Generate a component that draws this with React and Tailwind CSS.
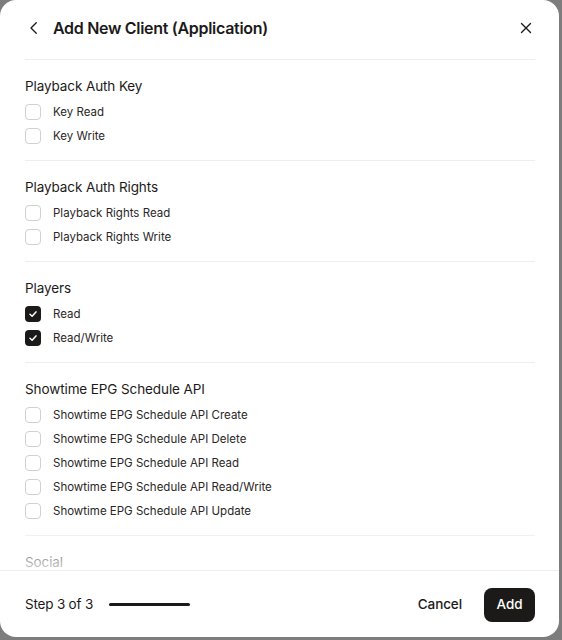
import React from "react";

const sections = [
  { title: "Playback Auth Key", items: [["Key Read", false], ["Key Write", false]] },
  { title: "Playback Auth Rights", items: [["Playback Rights Read", false], ["Playback Rights Write", false]] },
  { title: "Players", items: [["Read", true], ["Read/Write", true]] },
  {
    title: "Showtime EPG Schedule API",
    items: [
      ["Showtime EPG Schedule API Create", false],
      ["Showtime EPG Schedule API Delete", false],
      ["Showtime EPG Schedule API Read", false],
      ["Showtime EPG Schedule API Read/Write", false],
      ["Showtime EPG Schedule API Update", false],
    ],
  },
  { title: "Social", items: [] },
];

function Box({ checked }) {
  return checked ? (
    <span className="flex h-4 w-4 items-center justify-center rounded-[4px] bg-[#1c1a19]">
      <svg width="10" height="10" viewBox="0 0 10 10" fill="none">
        <path d="M2 5.2 L4.1 7.2 L8 2.9" stroke="white" strokeWidth="1.5" strokeLinecap="round" strokeLinejoin="round" />
      </svg>
    </span>
  ) : (
    <span className="h-4 w-4 rounded-[4px] border border-[#d3d1cf] bg-white" />
  );
}

export default function App() {
  return (
    <div className="h-[640px] w-[562px] bg-[#7d7d7d] font-['Inter',sans-serif] text-[#1c1a19]">
      <div className="flex h-[637px] w-[559px] flex-col overflow-hidden rounded-2xl bg-white">
        <div className="flex h-[59px] shrink-0 items-center justify-between pl-[25px] pr-6 pb-[3px]">
          <div className="flex items-center gap-[10px]">
            <svg width="18" height="18" viewBox="0 0 24 24" fill="none" stroke="#1c1a19" strokeWidth="1.8" strokeLinecap="round" strokeLinejoin="round">
              <path d="M15 5 L8 12 L15 19" />
            </svg>
            <span className="text-[16px] font-semibold tracking-[-0.3px]">Add New Client (Application)</span>
          </div>
          <svg width="18" height="18" viewBox="0 0 24 24" fill="none" stroke="#1c1a19" strokeWidth="1.8" strokeLinecap="round">
            <path d="M6 6 L18 18 M18 6 L6 18" />
          </svg>
        </div>
        <div className="ml-[25px] mr-6 h-px shrink-0 bg-[#efeeed]" />
        <div className="relative flex-1 overflow-hidden pl-[25px] pr-6">
          {sections.map((s, i) => (
            <div key={s.title} className={i < sections.length - 1 ? "border-b border-[#efeeed] py-4" : "pt-4"}>
              <div className="text-[13.5px] leading-5 tracking-[-0.1px]">{s.title}</div>
              {s.items.length > 0 && (
                <div className="mt-2 flex flex-col gap-2">
                  {s.items.map(([label, checked]) => (
                    <div key={label} className="flex h-4 items-center gap-3">
                      <Box checked={checked} />
                      <span className="text-[11.5px] leading-4 text-[#2a2726]">{label}</span>
                    </div>
                  ))}
                </div>
              )}
            </div>
          ))}
          <div className="pointer-events-none absolute bottom-0 left-0 right-0 h-10 bg-gradient-to-b from-white/0 to-white/80" />
        </div>
        <div className="flex h-[67px] shrink-0 items-center justify-between border-t border-[#efeeed] pl-[25px] pr-6 pt-px">
          <div className="flex items-center gap-4">
            <span className="text-[13.5px] tracking-[-0.2px]">Step 3 of 3</span>
            <span className="h-[3px] w-[81px] rounded-full bg-[#1c1a19]" />
          </div>
          <div className="flex items-center gap-[22px]">
            <span className="text-[13.5px] font-medium tracking-[-0.1px]">Cancel</span>
            <button className="h-[34px] w-[51px] rounded-lg bg-[#1c1a19] text-[13.5px] font-medium text-white">Add</button>
          </div>
        </div>
      </div>
    </div>
  );
}
